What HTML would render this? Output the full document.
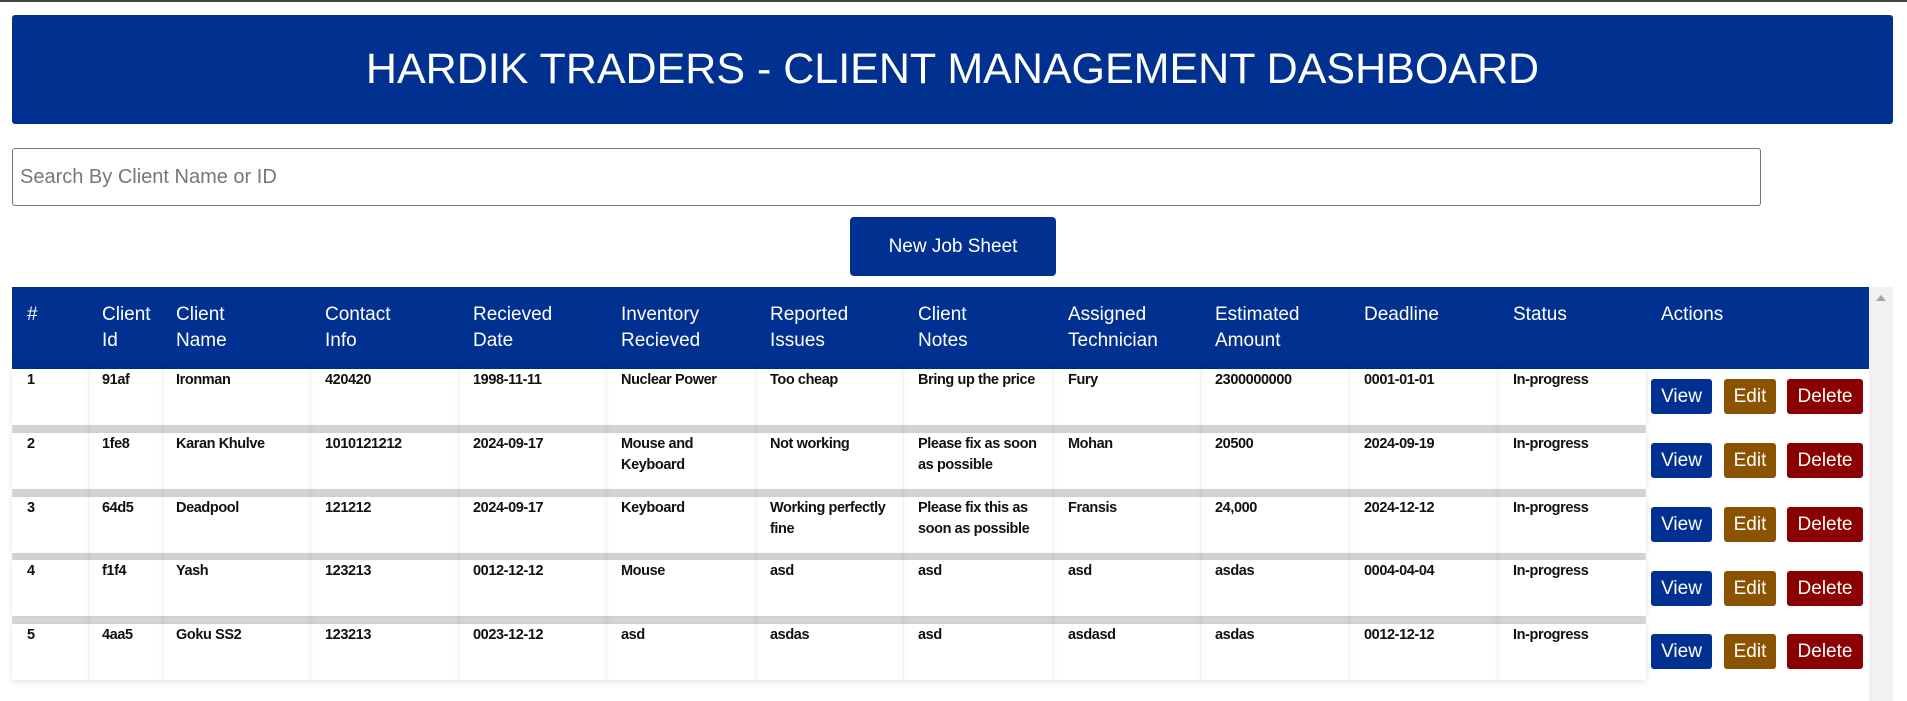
<!DOCTYPE html>
<html><head><meta charset="utf-8"><style>
*{box-sizing:border-box;margin:0;padding:0}
body{width:1907px;height:699px;overflow:hidden;background:#fff;font-family:"Liberation Sans",sans-serif;position:relative;border-top:2px solid #444}
.hdr{position:absolute;left:12px;top:13px;width:1881px;height:109px;background:#003190;border-radius:3px;color:#fff;font-size:43px;text-align:center;line-height:109px}
.search{position:absolute;left:12px;top:146px;width:1749px;height:58px;border:1px solid #777;border-radius:3px;color:#777;font-size:20px;padding-left:7px;line-height:56px}
.btn{position:absolute;left:850px;top:215px;width:206px;height:59px;background:#003190;border-radius:4px;color:#fff;font-size:19px;text-align:center;line-height:59px}
.th{position:absolute;left:12px;top:285px;width:1857px;height:82px;background:#003190}
.thc{position:absolute;top:300px;color:#fff;font-size:19px;line-height:26px;white-space:nowrap}
.sb{position:absolute;left:1869px;top:285px;width:24px;height:414px;background:#f1f1f1}
.sb:before{content:"";position:absolute;left:7px;top:8px;border:5px solid transparent;border-bottom:6px solid #a3a3a3;border-top:0}
.row{position:absolute;left:12px;width:1634px;height:56px;background:#fff;box-shadow:0 -3px 5px rgba(0,0,0,.08),0 3px 5px rgba(0,0,0,.08)}
.band{position:absolute;left:12px;width:1634px;height:9px;background:#e0e0e0}
.cell{position:absolute;font-size:14.5px;font-weight:bold;line-height:21px;color:#111;letter-spacing:-0.4px;white-space:nowrap}
.vl{position:absolute;width:1px;background:rgba(0,0,0,.05);box-shadow:0 0 4px rgba(0,0,0,.1)}
.b{position:absolute;height:35px;border-radius:3px;color:#fff;font-size:19px;text-align:center;line-height:35px}
.v{background:#003190;left:1651px;width:61px}
.e{background:#8b5200;left:1724px;width:52px}
.d{background:#8b0000;left:1787px;width:76px}
</style></head><body>
<div class="hdr">HARDIK TRADERS - CLIENT MANAGEMENT DASHBOARD</div>
<div class="search">Search By Client Name or ID</div>
<div class="btn">New Job Sheet</div>
<div class="th"></div>
<div class="sb"></div>
<div class="thc" style="left:27px">#</div>
<div class="thc" style="left:102px">Client<br>Id</div>
<div class="thc" style="left:176px">Client<br>Name</div>
<div class="thc" style="left:325px">Contact<br>Info</div>
<div class="thc" style="left:473px">Recieved<br>Date</div>
<div class="thc" style="left:621px">Inventory<br>Recieved</div>
<div class="thc" style="left:770px">Reported<br>Issues</div>
<div class="thc" style="left:918px">Client<br>Notes</div>
<div class="thc" style="left:1068px">Assigned<br>Technician</div>
<div class="thc" style="left:1215px">Estimated<br>Amount</div>
<div class="thc" style="left:1364px">Deadline</div>
<div class="thc" style="left:1513px">Status</div>
<div class="thc" style="left:1661px">Actions</div>

<div class="band" style="top:422px"></div>
<div class="band" style="top:486px"></div>
<div class="band" style="top:550px"></div>
<div class="band" style="top:614px"></div>
<div class="row" style="top:367px"></div>
<div class="row" style="top:431px"></div>
<div class="row" style="top:495px"></div>
<div class="row" style="top:558px"></div>
<div class="row" style="top:622px"></div>
<div class="vl" style="left:88px;top:367px;height:311px"></div>
<div class="vl" style="left:162px;top:367px;height:311px"></div>
<div class="vl" style="left:310px;top:367px;height:311px"></div>
<div class="vl" style="left:458px;top:367px;height:311px"></div>
<div class="vl" style="left:606px;top:367px;height:311px"></div>
<div class="vl" style="left:755px;top:367px;height:311px"></div>
<div class="vl" style="left:903px;top:367px;height:311px"></div>
<div class="vl" style="left:1053px;top:367px;height:311px"></div>
<div class="vl" style="left:1200px;top:367px;height:311px"></div>
<div class="vl" style="left:1349px;top:367px;height:311px"></div>
<div class="vl" style="left:1497px;top:367px;height:311px"></div>

<div style="position:absolute;top:368px;left:0">
<div class="cell" style="left:27px">1</div><div class="cell" style="left:102px">91af</div><div class="cell" style="left:176px">Ironman</div><div class="cell" style="left:325px">420420</div><div class="cell" style="left:473px">1998-11-11</div><div class="cell" style="left:621px">Nuclear Power</div><div class="cell" style="left:770px">Too cheap</div><div class="cell" style="left:918px">Bring up the price</div><div class="cell" style="left:1068px">Fury</div><div class="cell" style="left:1215px">2300000000</div><div class="cell" style="left:1364px">0001-01-01</div><div class="cell" style="left:1513px">In-progress</div>
</div>
<div style="position:absolute;top:432px;left:0">
<div class="cell" style="left:27px">2</div><div class="cell" style="left:102px">1fe8</div><div class="cell" style="left:176px">Karan Khulve</div><div class="cell" style="left:325px">1010121212</div><div class="cell" style="left:473px">2024-09-17</div><div class="cell" style="left:621px">Mouse and<br>Keyboard</div><div class="cell" style="left:770px">Not working</div><div class="cell" style="left:918px">Please fix as soon<br>as possible</div><div class="cell" style="left:1068px">Mohan</div><div class="cell" style="left:1215px">20500</div><div class="cell" style="left:1364px">2024-09-19</div><div class="cell" style="left:1513px">In-progress</div>
</div>
<div style="position:absolute;top:496px;left:0">
<div class="cell" style="left:27px">3</div><div class="cell" style="left:102px">64d5</div><div class="cell" style="left:176px">Deadpool</div><div class="cell" style="left:325px">121212</div><div class="cell" style="left:473px">2024-09-17</div><div class="cell" style="left:621px">Keyboard</div><div class="cell" style="left:770px">Working perfectly<br>fine</div><div class="cell" style="left:918px">Please fix this as<br>soon as possible</div><div class="cell" style="left:1068px">Fransis</div><div class="cell" style="left:1215px">24,000</div><div class="cell" style="left:1364px">2024-12-12</div><div class="cell" style="left:1513px">In-progress</div>
</div>
<div style="position:absolute;top:559px;left:0">
<div class="cell" style="left:27px">4</div><div class="cell" style="left:102px">f1f4</div><div class="cell" style="left:176px">Yash</div><div class="cell" style="left:325px">123213</div><div class="cell" style="left:473px">0012-12-12</div><div class="cell" style="left:621px">Mouse</div><div class="cell" style="left:770px">asd</div><div class="cell" style="left:918px">asd</div><div class="cell" style="left:1068px">asd</div><div class="cell" style="left:1215px">asdas</div><div class="cell" style="left:1364px">0004-04-04</div><div class="cell" style="left:1513px">In-progress</div>
</div>
<div style="position:absolute;top:623px;left:0">
<div class="cell" style="left:27px">5</div><div class="cell" style="left:102px">4aa5</div><div class="cell" style="left:176px">Goku SS2</div><div class="cell" style="left:325px">123213</div><div class="cell" style="left:473px">0023-12-12</div><div class="cell" style="left:621px">asd</div><div class="cell" style="left:770px">asdas</div><div class="cell" style="left:918px">asd</div><div class="cell" style="left:1068px">asdasd</div><div class="cell" style="left:1215px">asdas</div><div class="cell" style="left:1364px">0012-12-12</div><div class="cell" style="left:1513px">In-progress</div>
</div>

<div class="b v" style="top:377px">View</div><div class="b e" style="top:377px">Edit</div><div class="b d" style="top:377px">Delete</div>
<div class="b v" style="top:441px">View</div><div class="b e" style="top:441px">Edit</div><div class="b d" style="top:441px">Delete</div>
<div class="b v" style="top:505px">View</div><div class="b e" style="top:505px">Edit</div><div class="b d" style="top:505px">Delete</div>
<div class="b v" style="top:569px">View</div><div class="b e" style="top:569px">Edit</div><div class="b d" style="top:569px">Delete</div>
<div class="b v" style="top:632px">View</div><div class="b e" style="top:632px">Edit</div><div class="b d" style="top:632px">Delete</div>
</body></html>
